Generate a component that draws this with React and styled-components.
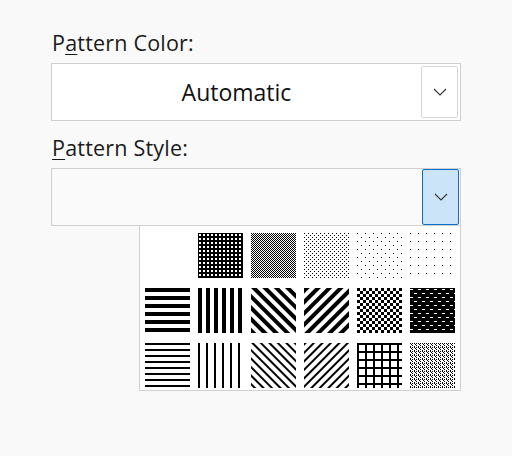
import React from "react";
import styled, { createGlobalStyle } from "styled-components";

const Global = createGlobalStyle`
  body { margin: 0; background: #f9f9f9; font-family: "Open Sans", "Noto Sans", sans-serif; }
`;

const Page = styled.div`
  width: 512px; height: 456px; padding: 23px 0 0 51px; box-sizing: border-box;
  display: flex; flex-direction: column;
`;
const Label = styled.div`
  font-size: 21.5px; color: #1a1a1a; height: 40px; line-height: 40px; padding-left: 1px;
  letter-spacing: 0.2px;
  u { text-decoration-thickness: 1px; text-underline-offset: 3px; }
`;
const Combo = styled.div`
  width: 410px; height: ${p => p.$h}px; box-sizing: border-box;
  border: 1px solid #cfcfcf; background: ${p => p.$bg};
  display: flex; align-items: center; padding: 2px 2px 2px 0;
`;
const Value = styled.div`
  flex: 1; text-align: center; font-size: 23px; color: #111;
`;
const Arrow = styled.div`
  width: 37px; align-self: stretch; box-sizing: border-box; border-radius: 2px;
  border: 1px solid ${p => p.$active ? "#0b6fc6" : "#d4d4d4"};
  background: ${p => p.$active ? "#cce4f7" : "#fff"};
  display: flex; align-items: center; justify-content: center;
  margin: ${p => p.$active ? "-2px -1px -2px 0" : "0"};
`;
const Gap = styled.div` height: 7px; `;
const DropRow = styled.div` display: flex; justify-content: flex-end; width: 410px; `;
const Panel = styled.div`
  width: 322px; height: 166px; box-sizing: border-box; margin-top: -1px;
  background: #fff; border: 1px solid #d0d0d0;
  display: grid; grid-template-columns: repeat(6, 45px); column-gap: 8px; row-gap: 8px;
  padding: 7px 0 0 5px;
`;
const Swatch = styled.svg` width: 45px; height: 45px; display: block; `;

const Chevron = () => (
  <svg width="14" height="8" viewBox="0 0 14 8"><path d="M1 1l6 6 6-6" fill="none" stroke="#333" strokeWidth="1.1" /></svg>
);

const px = (size, cells, bg = "#fff") => (
  <>
    <rect width={size} height={size} fill={bg} />
    {cells.map(([x, y, w = 1, h = 1], i) => <rect key={i} x={x} y={y} width={w} height={h} fill={bg === "#fff" ? "#000" : "#fff"} />)}
  </>
);

const defs = [
  null,
  { s: 4, c: px(4, [[1, 1, 2, 2]], "#000") },
  { s: 2, c: px(2, [[0, 0], [1, 1]]) },
  { s: 4, c: px(4, [[0, 0], [2, 2]]) },
  { s: 8, c: px(8, [[0, 0], [4, 4]]) },
  { s: 8, c: px(8, [[0, 0]]) },
  { s: 8, c: px(8, [[0, 0, 8, 4]]) },
  { s: 8, c: px(8, [[0, 0, 4, 8]]) },
  { s: 8, rot: -45, c: px(8, [[0, 0, 4, 8]]) },
  { s: 8, rot: 45, c: px(8, [[0, 0, 4, 8]]) },
  { s: 6, c: px(6, [[0, 0, 3, 3], [3, 3, 3, 3]]) },
  { s: 8, c: px(8, [[0, 1, 3, 1], [4, 5, 3, 1]], "#000") },
  { s: 6, c: px(6, [[0, 0, 6, 1.5]]) },
  { s: 8, c: px(8, [[0, 0, 2, 8]]) },
  { s: 6, rot: -45, c: px(6, [[0, 0, 1.5, 6]]) },
  { s: 6, rot: 45, c: px(6, [[0, 0, 1.5, 6]]) },
  { s: 8, c: px(8, [[0, 0, 8, 2], [0, 0, 2, 8]]) },
  { s: 4, c: px(4, [[0, 0], [2, 0], [1, 1], [2, 2], [0, 3]]) },
];

const PatternSwatch = ({ d, i }) => (
  <Swatch viewBox="0 0 45 45" shapeRendering="crispEdges">
    {d && (
      <>
        <defs>
          <pattern id={"p" + i} width={d.s} height={d.s} patternUnits="userSpaceOnUse"
            patternTransform={d.rot ? `rotate(${d.rot})` : undefined}>{d.c}</pattern>
        </defs>
        <rect width="45" height="45" fill={`url(#p${i})`} />
      </>
    )}
  </Swatch>
);

export default function App() {
  return (
    <Page>
      <Global />
      <Label>P<u>a</u>ttern Color:</Label>
      <Combo $h={58} $bg="#fff">
        <Value>Automatic</Value>
        <Arrow><Chevron /></Arrow>
      </Combo>
      <Gap />
      <Label><u>P</u>attern Style:</Label>
      <Combo $h={58} $bg="#fafafa">
        <Value />
        <Arrow $active><Chevron /></Arrow>
      </Combo>
      <DropRow>
        <Panel>
          {defs.map((d, i) => <PatternSwatch key={i} d={d} i={i} />)}
        </Panel>
      </DropRow>
    </Page>
  );
}
